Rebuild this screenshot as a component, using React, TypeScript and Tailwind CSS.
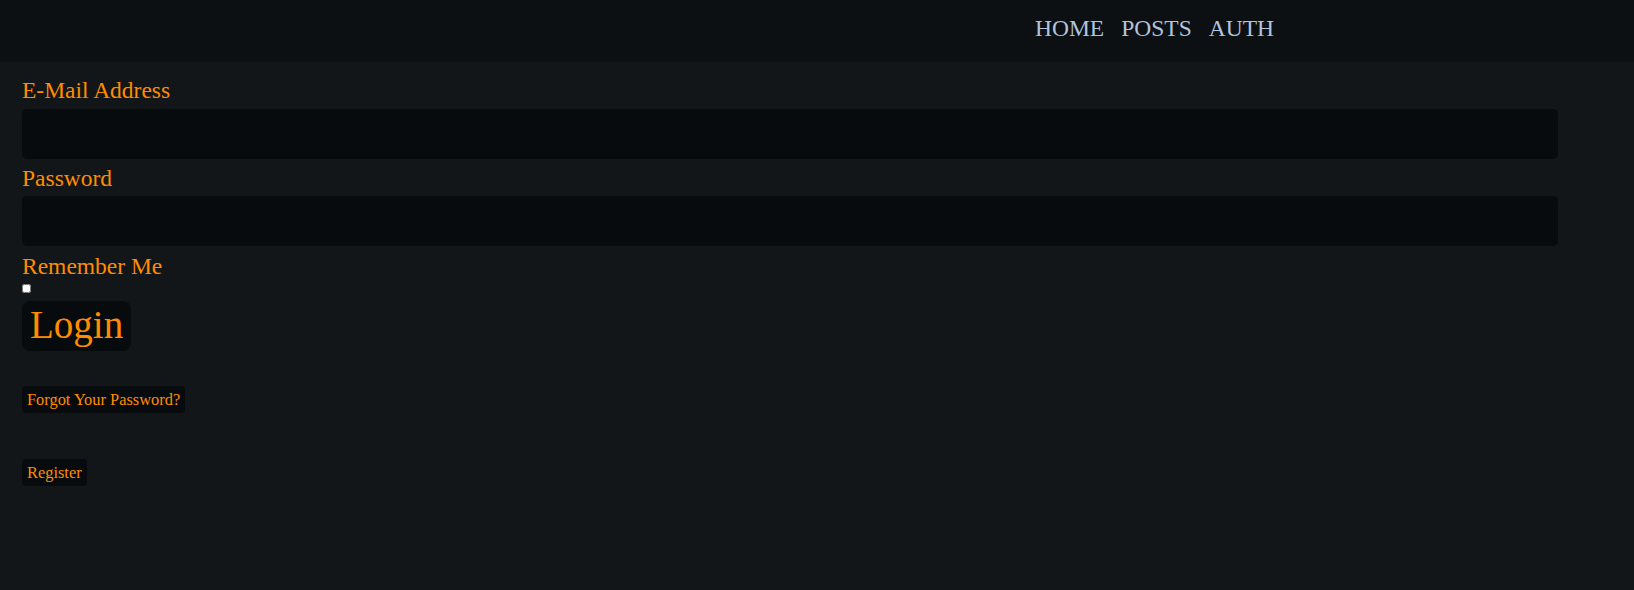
import { useState } from "react";

const NavLink = ({ label }: { label: string }) => (
  <a href="#" className="text-[#b0c4de] no-underline">
    {label}
  </a>
);

const App = () => {
  const [email, setEmail] = useState("");
  const [password, setPassword] = useState("");
  const [remember, setRemember] = useState(false);

  return (
    <div className="min-h-screen bg-[#131619] font-['Liberation_Serif','Times_New_Roman',serif]">
      {/* Header */}
      <header className="h-[62px] bg-[#0d1013] pt-[15px]">
        <nav className="flex gap-[17px] pl-[1035px] text-[23.5px] leading-[26px]">
          <NavLink label="HOME" />
          <NavLink label="POSTS" />
          <NavLink label="AUTH" />
        </nav>
      </header>

      {/* Login form */}
      <main className="px-[22px] pt-[15px] text-[#ff8c00]">
        <form onSubmit={(e) => e.preventDefault()} className="flex flex-col items-start">
          <label htmlFor="email" className="block text-[23.5px] leading-[26px]">
            E-Mail Address
          </label>
          <input
            id="email"
            type="email"
            value={email}
            onChange={(e) => setEmail(e.target.value)}
            className="mt-[6px] h-[50px] w-[1536px] rounded-[5px] bg-[#080b0e] px-3 text-[20px] text-[#ff8c00] outline-none"
          />

          <label htmlFor="password" className="mt-[6px] block text-[23.5px] leading-[26px]">
            Password
          </label>
          <input
            id="password"
            type="password"
            value={password}
            onChange={(e) => setPassword(e.target.value)}
            className="mt-[5px] h-[50px] w-[1536px] rounded-[5px] bg-[#080b0e] px-3 text-[20px] text-[#ff8c00] outline-none"
          />

          <label htmlFor="remember" className="mt-[7px] block text-[23.5px] leading-[26px]">
            Remember Me
          </label>
          <input
            id="remember"
            type="checkbox"
            checked={remember}
            onChange={(e) => setRemember(e.target.checked)}
            className="m-0 mt-[5px] h-[9px] w-[9px]"
          />

          <button
            type="submit"
            className="mt-[8px] h-[50px] rounded-[8px] bg-[#080b0e] px-[8px] pb-[2px] text-[39px] leading-[48px] text-[#ff8c00]"
          >
            Login
          </button>

          <button
            type="button"
            className="mt-[35px] rounded-[4px] bg-[#080b0e] px-[5px] py-[4px] text-[16.4px] leading-[19px] text-[#ff8c00]"
          >
            Forgot Your Password?
          </button>

          <button
            type="button"
            className="mt-[46px] rounded-[4px] bg-[#080b0e] px-[5px] py-[4px] text-[16.4px] leading-[19px] text-[#ff8c00]"
          >
            Register
          </button>
        </form>
      </main>
    </div>
  );
};

export default App;
